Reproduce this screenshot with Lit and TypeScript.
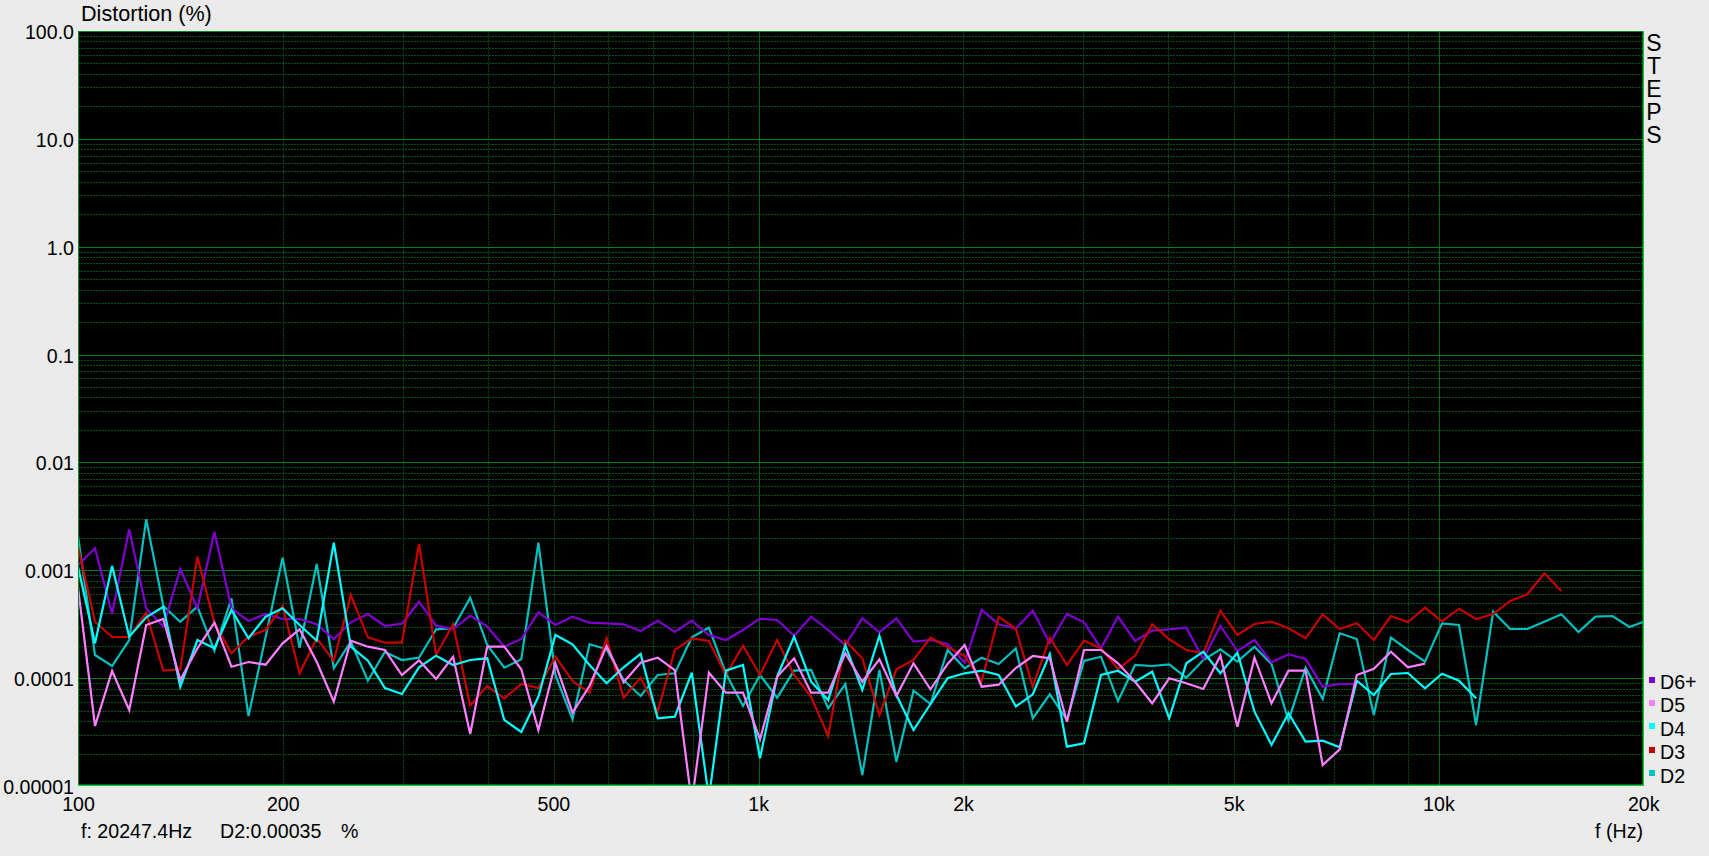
import { LitElement, html, css, svg } from "lit";
import { customElement } from "lit/decorators.js";

const LEFT = 78;
const TOP = 31;
const WIDTH = 1566;
const HEIGHT = 755;
const DECADE_Y = HEIGHT / 7;
const DECADE_X = 680.2;

const xOf = (f: number) => LEFT + 0.5 + DECADE_X * Math.log10(f / 100);
const yOfDecade = (k: number, m = 1) => TOP + DECADE_Y * (k - Math.log10(m));
const stepX = (i: number) => LEFT + 17.05 * i;

const series = [
  {
    name: "D2",
    color: "#00c0c0",
    ys: [536,655,666,640,519.3,606,621.7,606.7,650.7,598.3,716,637,557.7,647.7,564,668.3,641.7,680.7,652,
      660,657.7,629.3,628.3,597.7,645,667.7,659.3,542.7,675,719.3,644.3,649.3,680,696,675,673.3,637.3,
      627.7,673.3,706,675,697.7,670.7,670,708.3,684,775,670,761.7,690.7,704,650,668.3,657.7,664,648.5,
      718.3,694.3,720,661,656.7,701,665,666,664.3,677.7,660,649.3,661.7,646.7,664,720.7,667.7,699,
      633.3,639,715,637.7,650,661.7,623.3,625,725,611.7,629,629,621.7,614.3,632,616.7,616,627,620.6],
  },
  {
    name: "D6+",
    color: "#8000d0",
    ys: [565,548.3,614,529.3,608.3,626.7,569,608.3,531.7,608.3,621,614,619,619,624.3,639,622.3,614,626,
      623.7,601.7,625.7,629,615.7,626.7,646.7,639,612.3,625,616.7,622.7,623.3,624.3,631,620.7,632,620.7,
      635,640,630,618.7,620,635.7,616.7,630,645,618.3,632.3,618.3,641.7,640,644,662.7,610,624.3,628.5,
      610.7,643.3,614,622.3,648.3,616.7,641,630.7,629.3,627.7,659,626,651,640,662.3,654.3,659,686.7,684,684],
  },
  {
    name: "D3",
    color: "#c80000",
    ys: [546.7,621.7,637,637,612.7,670.7,669.3,556.7,623,653.3,636.7,630,606,673.3,638.3,660.7,595,637.3,642.7,
      642.7,544,655,624.3,705.7,686,698.3,684,688,656.7,681,692.7,638.3,697.7,677.7,711.7,650,638.3,
      641,675,645.7,675,640,675,696.7,736,640.7,658.3,715,669.3,660,637.7,647.3,656,681,616.7,628.8,
      686.7,637.7,665,640.7,648.3,669,655.7,624.3,639.3,650,653.3,610.7,635,624,621.7,628.3,638.3,614.3,
      629,623.3,640,616,622,607.7,621.3,608.7,619,614,601,594.3,573.3,591],
  },
  {
    name: "D4",
    color: "#00ffff",
    ys: [566.7,643.3,566,636.7,617.3,606.7,686.7,640,648.3,610,638.3,616.7,608.3,625,640.7,542.7,646.7,660.7,688,
      694,667.3,655.7,665,660,658.3,720,732,696.7,635,644.3,665,683.3,667.3,654,718.3,716.7,672.7,
      798,670.7,665,758.3,676.7,636.7,681.7,700,645.7,690,635.7,695,730,704,678.3,673.3,670.7,675,706.5,
      694.3,654,746.7,743.3,675,670.7,681.7,671.7,718.3,663.3,651.7,673.3,652.7,711.7,745,713.3,741.7,740.7,
      747.3,680.7,695,674,673,688.3,673.7,680.7,698.3],
  },
  {
    name: "D5",
    color: "#ff80ff",
    ys: [587.3,726,671,710,625,619,680,648.3,622.7,666.7,662,664.7,643.3,629.3,661.7,701.7,640.7,646.7,650,
      675,660.3,679,656.7,734,646.7,646.7,669.3,730,663.3,712.7,686,646,682.3,662.7,657.7,670,803,
      672.7,692.7,692.7,739.3,676.7,658.3,692.7,692.7,653.3,681.7,659.3,696,663.3,689.3,664,645,686.7,684.7,668,
      656,658.3,721.7,650,650,663.3,681.7,703.3,678.3,683.3,689,655.7,726.7,657.7,703.3,670.7,670.7,765,
      749.3,675,668.7,651.7,667.3,663.7],
  },
];

const legend = ["D6+", "D5", "D4", "D3", "D2"].map((n) => series.find((s) => s.name === n)!);

const yLabels = ["100.0", "10.0", "1.0", "0.1", "0.01", "0.001", "0.0001", "0.00001"];
const xLabels: [string, number][] = [
  ["100", 100], ["200", 200], ["500", 500], ["1k", 1000], ["2k", 2000], ["5k", 5000], ["10k", 10000], ["20k", 20000],
];
const verticalMinor = [200, 300, 400, 500, 600, 700, 800, 900, 2000, 3000, 4000, 5000, 6000, 7000, 8000, 9000];
const verticalMajor = [1000, 10000];

@customElement("app-root")
export class AppRoot extends LitElement {
  static styles = css`
    :host {
      display: grid;
      grid-template-columns: ${LEFT}px ${WIDTH}px 1fr;
      grid-template-rows: ${TOP}px ${HEIGHT}px auto auto;
      width: 1709px;
      height: 856px;
      overflow: hidden;
      font-family: "Liberation Sans", Arial, sans-serif;
      color: #000;
      background: repeating-conic-gradient(#efedef 0 25%, #e6e8e6 0 50%) 0 0 / 2px 2px;
    }
    .title {
      grid-column: 1 / -1;
      font-size: 21.6px;
      line-height: 25px;
      padding: 1px 0 0 81px;
      height: 30px;
      box-sizing: border-box;
    }
    .y-axis {
      position: relative;
      font-size: 19.6px;
    }
    .y-label {
      position: absolute;
      right: 4px;
      line-height: 20px;
      transform: translateY(-9px);
    }
    .plot {
      display: block;
      width: ${WIDTH}px;
      height: ${HEIGHT}px;
      background: #000;
    }
    .side {
      display: flex;
      flex-direction: column;
      justify-content: space-between;
      padding: 1px 0 0 1px;
      height: ${HEIGHT}px;
      box-sizing: border-box;
    }
    .steps {
      display: flex;
      flex-direction: column;
      font-size: 23px;
      line-height: 23px;
      width: 18px;
      align-items: center;
    }
    .legend {
      display: flex;
      flex-direction: column;
      font-size: 19.6px;
      line-height: 23.4px;
      padding-left: 4px;
      margin-bottom: -2px;
    }
    .legend-row {
      display: flex;
      align-items: center;
      gap: 5px;
    }
    .swatch {
      width: 6px;
      height: 6px;
      margin-top: -6px;
    }
    .x-axis {
      grid-column: 1 / -1;
      position: relative;
      height: 26px;
      font-size: 19.6px;
    }
    .x-label {
      position: absolute;
      top: 7px;
      line-height: 22px;
      transform: translateX(-50%);
    }
    .status {
      grid-column: 1 / -1;
      display: flex;
      font-size: 19.6px;
      line-height: 24px;
      margin-top: -6px;
      padding: 0 66px 0 81px;
    }
    .status-f { width: 139px; }
    .status-d { width: 121px; }
    .status-u { flex: 1; }
  `;

  private grid() {
    const lines = [];
    for (const f of verticalMinor) {
      const x = Math.round(xOf(f)) + 0.5;
      lines.push(svg`<line x1=${x} x2=${x} y1=${TOP} y2=${TOP + HEIGHT} stroke="#004414" stroke-dasharray="2 1"></line>`);
    }
    for (let k = 1; k <= 7; k++) {
      for (let m = 2; m <= 9; m++) {
        const y = Math.round(yOfDecade(k, m)) + 0.5;
        lines.push(svg`<line x1=${LEFT} x2=${LEFT + WIDTH} y1=${y} y2=${y} stroke="#005414" stroke-dasharray="2 1"></line>`);
      }
    }
    for (const f of verticalMajor) {
      const x = Math.round(xOf(f)) + 0.5;
      lines.push(svg`<line x1=${x} x2=${x} y1=${TOP} y2=${TOP + HEIGHT} stroke="#006a18"></line>`);
    }
    for (let k = 1; k <= 6; k++) {
      const y = Math.round(yOfDecade(k)) + 0.5;
      lines.push(svg`<line x1=${LEFT} x2=${LEFT + WIDTH} y1=${y} y2=${y} stroke="#008010"></line>`);
    }
    return lines;
  }

  render() {
    return html`
      <div class="title">Distortion (%)</div>
      <div class="y-axis">
        ${yLabels.map((t, k) => html`<div class="y-label" style="top:${(DECADE_Y * k).toFixed(1)}px">${t}</div>`)}
      </div>
      <svg class="plot" viewBox="${LEFT} ${TOP} ${WIDTH} ${HEIGHT}" xmlns="http://www.w3.org/2000/svg">
        ${this.grid()}
        ${series.map(
          (s) => svg`<polyline fill="none" stroke=${s.color} stroke-width="2.2" stroke-linejoin="miter"
            points=${s.ys.map((y, i) => `${stepX(i).toFixed(1)},${y}`).join(" ")}></polyline>`,
        )}
        <path d="M${LEFT + 0.5} ${TOP + HEIGHT}V${TOP + 0.5}H${LEFT + WIDTH - 0.5}" fill="none" stroke="#008a20"></path>
        <path d="M${LEFT} ${TOP + HEIGHT - 0.75}H${LEFT + WIDTH - 0.75}V${TOP}" fill="none" stroke="#00c838" stroke-width="1.5"></path>
      </svg>
      <div class="side">
        <div class="steps">${"STEPS".split("").map((c) => html`<span>${c}</span>`)}</div>
        <div class="legend">
          ${legend.map(
            (s) => html`<div class="legend-row">
              <span class="swatch" style="background:${s.color}"></span><span>${s.name}</span>
            </div>`,
          )}
        </div>
      </div>
      <div class="x-axis">
        ${xLabels.map(([t, f]) => html`<div class="x-label" style="left:${xOf(f).toFixed(1)}px">${t}</div>`)}
      </div>
      <div class="status">
        <span class="status-f">f: 20247.4Hz</span>
        <span class="status-d">D2:0.00035</span>
        <span class="status-u">%</span>
        <span>f (Hz)</span>
      </div>
    `;
  }
}
